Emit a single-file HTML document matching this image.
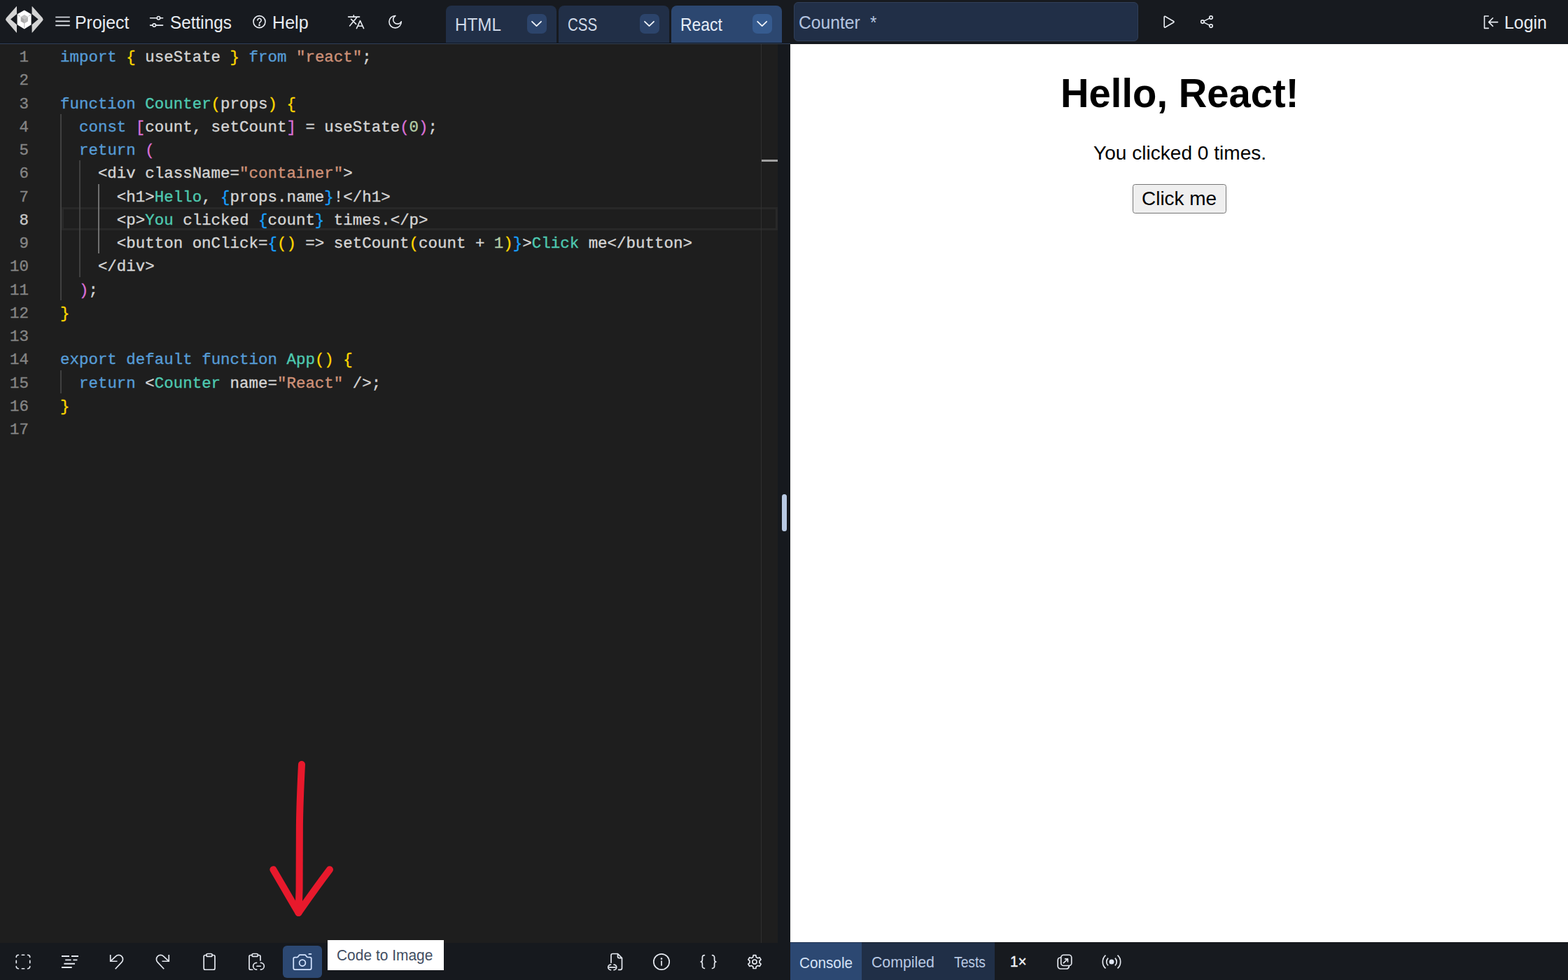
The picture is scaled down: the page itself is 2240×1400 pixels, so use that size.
<!DOCTYPE html>
<html lang="en">
<head>
<meta charset="utf-8">
<title>LiveCodes - Counter</title>
<style>
*{box-sizing:border-box;margin:0;padding:0}
html,body{width:2240px;height:1400px;overflow:hidden;background:#1e1e1e}
body{position:relative;font-family:"Liberation Sans",Arial,sans-serif;-webkit-font-smoothing:antialiased}
.abs,.t,svg.i{position:absolute}
header,nav,main,section,footer{display:block}
h1,p{font-weight:normal}
.t{white-space:pre;transform-origin:0 50%;font-family:"Liberation Sans",Arial,sans-serif}
svg.i{overflow:visible;fill:none;stroke:#e6eaf1;stroke-width:1.75;stroke-linecap:round;stroke-linejoin:round}

/* ---------- top bar ---------- */
#topbar{left:0;top:0;width:2240px;height:62px;background:#171a1f;border-bottom:1px solid #0e1623}
#edline{left:0;top:62px;width:1129px;height:1.3px;background:#344155}
.tab{top:8px;width:158px;height:53px;border-radius:8px 8px 0 0;background:#212f47}
.tab.on{background:#2c4770}
.dd{top:20px;width:28px;height:28px;border-radius:7px;background:#2c446b}
.tab.on + .dd, .dd.on{background:#365b8f}
#title{left:1134px;top:3px;width:492px;height:56px;border-radius:6px;background:#212f47;border:1.5px solid #313f58}

/* ---------- editor ---------- */
#editor{left:0;top:63px;width:1110.5px;height:1283.5px;background:#1e1e1e;overflow:hidden}
#code{position:absolute;left:0;top:0;width:1111px;font-family:"Liberation Mono","DejaVu Sans Mono",monospace;font-size:22.46px;line-height:33.25px;-webkit-text-stroke:0.35px}
.ln{position:absolute;left:0;width:1111px;height:33px;line-height:33px;white-space:pre}
.ln .no{position:absolute;left:0;top:0;width:41px;text-align:right;color:#858585}
.ln .src{position:absolute;left:86px;top:0;color:#d4d4d4}
.ln.cur .no{color:#c6c6c6}
#curline{left:88px;top:233px;width:1023px;height:33.25px;border:3.2px solid #282828}
.guide{width:2px;background:#404040}
.guide.act{background:#707070}
#ruler{left:1087px;top:63px;width:1px;height:1284px;background:#303030}
#mark{left:1088px;top:228px;width:23px;height:3px;background:#a0a0a0}
#gutter{left:1110.5px;top:63px;width:18.5px;height:1337px;background:#16191e}
#handle{left:1117px;top:706px;width:7px;height:53px;border-radius:3.5px;background:#b8c9e3}

/* ---------- preview ---------- */
#preview{left:1129px;top:62.9px;width:1111px;height:1283.2px;background:#fff;color:#000;text-align:center}
#btn{left:1618.2px;top:263.2px;width:133.8px;height:41.4px;border:1.6px solid #767676;border-radius:3.6px;background:#efefef}

/* ---------- bottom bars ---------- */
#botl{left:0;top:1346.5px;width:1111px;height:53.5px;background:#16191e}
#botr{left:1129px;top:1346px;width:1111px;height:54px;background:#171a1f;border-top:1px solid #0b0d11}
#tconsole{left:1129px;top:1346px;width:102px;height:54px;background:#2c4872;border-top:1px solid #1d3050}
#tothers{left:1231px;top:1346px;width:190px;height:54px;background:#202f47;border-top:1px solid #131c2c}
#cam{left:404px;top:1351px;width:56px;height:46px;border-radius:6px;background:#2c4872}
#tip{left:468px;top:1343px;width:166px;height:43px;background:#fff}

</style>
</head>
<body>
<header id="toolbar">
<div id="topbar" class="abs"></div>
<div id="edline" class="abs"></div>
<nav id="menu" aria-label="Main menu">
<span class="t" style="left:106.51px;top:14.30px;font-size:25px;line-height:36px;transform-origin:0 27px;transform:scaleX(0.9952);color:#e8ecf2;">Project</span><span class="t" style="left:242.78px;top:14.30px;font-size:25px;line-height:36px;transform-origin:0 27px;transform:scaleX(0.9737);color:#e8ecf2;">Settings</span><span class="t" style="left:388.99px;top:14.30px;font-size:25px;line-height:36px;transform-origin:0 27px;transform:scaleX(1.0049);color:#e8ecf2;">Help</span>
</nav>
<div id="editor-tabs" role="tablist">
<div class="abs tab" style="left:637px"></div><div class="abs dd" style="left:753px"></div>
<div class="abs tab" style="left:798px"></div><div class="abs dd" style="left:914px"></div>
<div class="abs tab on" style="left:959px"></div><div class="abs dd on" style="left:1075px"></div>
<span class="t" style="left:649.96px;top:16.30px;font-size:26.5px;line-height:38px;transform-origin:0 28px;transform:scaleX(0.9138);color:#cfd9e8;">HTML</span><span class="t" style="left:810.97px;top:16.30px;font-size:26.5px;line-height:38px;transform-origin:0 28px;transform:scaleX(0.7761);color:#cfd9e8;">CSS</span><span class="t" style="left:971.91px;top:16.30px;font-size:26.5px;line-height:38px;transform-origin:0 28px;transform:scaleX(0.8658);color:#e6edf7;">React</span>
</div>
<div id="title" class="abs"></div>
<span class="t" style="left:1141.27px;top:14.30px;font-size:25.5px;line-height:36px;transform-origin:0 27px;transform:scaleX(0.9679);color:#b4c5e0;">Counter</span><span class="t" style="left:1242.76px;top:14.30px;font-size:25.5px;line-height:36px;transform-origin:0 27px;transform:scaleX(0.9539);color:#b4c5e0;">*</span><span class="t" style="left:2148.61px;top:14.30px;font-size:25.5px;line-height:36px;transform-origin:0 27px;transform:scaleX(0.9742);color:#e8ecf2;">Login</span>
</header>

<main>
<section id="editor" class="abs" aria-label="Code editor">
<div id="curline" class="abs"></div>
<div class="abs guide" style="left:86px;top:99.75px;height:266px"></div>
<div class="abs guide" style="left:113px;top:166.25px;height:166.25px"></div>
<div class="abs guide act" style="left:140px;top:199.5px;height:99.75px"></div>
<div class="abs guide" style="left:86px;top:465.5px;height:33.25px"></div>
<div id="code">
<div class="ln" style="top:2.8px"><span class="no">1</span><span class="src"><span style="color:#569cd6">import</span><span style="color:#d4d4d4"> </span><span style="color:#ffd700">{</span><span style="color:#d4d4d4"> useState </span><span style="color:#ffd700">}</span><span style="color:#d4d4d4"> </span><span style="color:#569cd6">from</span><span style="color:#d4d4d4"> </span><span style="color:#ce9178">&quot;react&quot;</span><span style="color:#d4d4d4">;</span></span></div>
<div class="ln" style="top:35.8px"><span class="no">2</span><span class="src"></span></div>
<div class="ln" style="top:69.8px"><span class="no">3</span><span class="src"><span style="color:#569cd6">function</span><span style="color:#d4d4d4"> </span><span style="color:#4ec9b0">Counter</span><span style="color:#ffd700">(</span><span style="color:#d4d4d4">props</span><span style="color:#ffd700">)</span><span style="color:#d4d4d4"> </span><span style="color:#ffd700">{</span></span></div>
<div class="ln" style="top:102.8px"><span class="no">4</span><span class="src"><span style="color:#d4d4d4">  </span><span style="color:#569cd6">const</span><span style="color:#d4d4d4"> </span><span style="color:#da70d6">[</span><span style="color:#d4d4d4">count, setCount</span><span style="color:#da70d6">]</span><span style="color:#d4d4d4"> = useState</span><span style="color:#da70d6">(</span><span style="color:#b5cea8">0</span><span style="color:#da70d6">)</span><span style="color:#d4d4d4">;</span></span></div>
<div class="ln" style="top:135.8px"><span class="no">5</span><span class="src"><span style="color:#d4d4d4">  </span><span style="color:#569cd6">return</span><span style="color:#d4d4d4"> </span><span style="color:#da70d6">(</span></span></div>
<div class="ln" style="top:168.8px"><span class="no">6</span><span class="src"><span style="color:#d4d4d4">    &lt;div className=</span><span style="color:#ce9178">&quot;container&quot;</span><span style="color:#d4d4d4">&gt;</span></span></div>
<div class="ln" style="top:202.8px"><span class="no">7</span><span class="src"><span style="color:#d4d4d4">      &lt;h1&gt;</span><span style="color:#4ec9b0">Hello</span><span style="color:#d4d4d4">, </span><span style="color:#179fff">{</span><span style="color:#d4d4d4">props.name</span><span style="color:#179fff">}</span><span style="color:#d4d4d4">!&lt;/h1&gt;</span></span></div>
<div class="ln cur" style="top:235.8px"><span class="no">8</span><span class="src"><span style="color:#d4d4d4">      &lt;p&gt;</span><span style="color:#4ec9b0">You</span><span style="color:#d4d4d4"> clicked </span><span style="color:#179fff">{</span><span style="color:#d4d4d4">count</span><span style="color:#179fff">}</span><span style="color:#d4d4d4"> times.&lt;/p&gt;</span></span></div>
<div class="ln" style="top:268.8px"><span class="no">9</span><span class="src"><span style="color:#d4d4d4">      &lt;button onClick=</span><span style="color:#179fff">{</span><span style="color:#ffd700">()</span><span style="color:#d4d4d4"> =&gt; setCount</span><span style="color:#ffd700">(</span><span style="color:#d4d4d4">count + </span><span style="color:#b5cea8">1</span><span style="color:#ffd700">)</span><span style="color:#179fff">}</span><span style="color:#d4d4d4">&gt;</span><span style="color:#4ec9b0">Click</span><span style="color:#d4d4d4"> me&lt;/button&gt;</span></span></div>
<div class="ln" style="top:301.8px"><span class="no">10</span><span class="src"><span style="color:#d4d4d4">    &lt;/div&gt;</span></span></div>
<div class="ln" style="top:335.8px"><span class="no">11</span><span class="src"><span style="color:#d4d4d4">  </span><span style="color:#da70d6">)</span><span style="color:#d4d4d4">;</span></span></div>
<div class="ln" style="top:368.8px"><span class="no">12</span><span class="src"><span style="color:#ffd700">}</span></span></div>
<div class="ln" style="top:401.8px"><span class="no">13</span><span class="src"></span></div>
<div class="ln" style="top:434.8px"><span class="no">14</span><span class="src"><span style="color:#569cd6">export</span><span style="color:#d4d4d4"> </span><span style="color:#569cd6">default</span><span style="color:#d4d4d4"> </span><span style="color:#569cd6">function</span><span style="color:#d4d4d4"> </span><span style="color:#4ec9b0">App</span><span style="color:#ffd700">()</span><span style="color:#d4d4d4"> </span><span style="color:#ffd700">{</span></span></div>
<div class="ln" style="top:468.8px"><span class="no">15</span><span class="src"><span style="color:#d4d4d4">  </span><span style="color:#569cd6">return</span><span style="color:#d4d4d4"> &lt;</span><span style="color:#4ec9b0">Counter</span><span style="color:#d4d4d4"> name=</span><span style="color:#ce9178">&quot;React&quot;</span><span style="color:#d4d4d4"> /&gt;;</span></span></div>
<div class="ln" style="top:501.8px"><span class="no">16</span><span class="src"><span style="color:#ffd700">}</span></span></div>
<div class="ln" style="top:534.8px"><span class="no">17</span><span class="src"></span></div>
</div>
</section>
<div id="ruler" class="abs"></div>
<div id="mark" class="abs"></div>
<div id="gutter" class="abs"></div>
<div id="handle" class="abs"></div>

<section id="result" aria-label="Result">
<div id="preview" class="abs"></div>
<div id="btn" class="abs"></div>
<h1 class="t" style="left:1515.03px;top:98.30px;font-size:56px;font-weight:bold;line-height:71px;transform-origin:0 55px;transform:scale(1.0038,1.01);color:#000;">Hello, React!</h1><p class="t" style="left:1561.94px;top:199.30px;font-size:28px;line-height:39px;transform-origin:0 29px;transform:scaleX(1.0029);color:#000;">You clicked 0 times.</p><span class="t" style="left:1631.40px;top:264.30px;font-size:28px;line-height:39px;transform-origin:0 29px;transform:scaleX(0.9978);color:#000;">Click me</span>
</section>
</main>

<footer id="toolbars">
<div id="botl" class="abs"></div>
<div id="botr" class="abs"></div>
<div id="tconsole" class="abs"></div>
<div id="tothers" class="abs"></div>
<div id="cam" class="abs"></div>
<div id="tip" class="abs" role="tooltip"></div>
<span class="t" style="left:480.85px;top:1349.30px;font-size:21.3px;line-height:32px;transform-origin:0 23px;transform:scaleX(0.9834);color:#424e62;">Code to Image</span><span class="t" style="left:1141.96px;top:1358.30px;font-size:22.7px;line-height:34px;transform-origin:0 25px;transform:scaleX(0.9130);color:#d5e2f6;">Console</span><span class="t" style="left:1244.94px;top:1357.30px;font-size:22.7px;line-height:34px;transform-origin:0 25px;transform:scaleX(0.9371);color:#b9c9e3;">Compiled</span><span class="t" style="left:1362.61px;top:1357.30px;font-size:22.7px;line-height:34px;transform-origin:0 25px;transform:scaleX(0.8487);color:#b9c9e3;">Tests</span><span class="t" style="left:1443.05px;top:1357.30px;font-size:22.2px;line-height:33px;transform-origin:0 24px;transform:scaleX(0.9312);color:#eef1f6;-webkit-text-stroke:0.45px;">1×</span>
</footer>

<svg class="i" id="icons" width="2240" height="1400" viewBox="0 0 2240 1400" style="left:0;top:0">
<g stroke="none">
<path fill="#d4d4d4" d="M24 9.6 Q24 8.6 23.2 9.5 L9 25.4 Q7.2 27.6 9 29.8 L23.2 46.3 Q24 47.2 24 46.2 L24 35.2 L15.1 27.6 L24 20Z"/>
<path fill="#d4d4d4" d="M45.6 9.6 Q45.6 8.6 46.4 9.5 L60.7 25.4 Q62.5 27.6 60.7 29.8 L46.4 46.3 Q45.6 47.2 45.6 46.2 L45.6 35.2 L54.7 27.6 L45.6 20Z"/>
<path fill="#ffffff" d="M34.8 14.4 L44.6 20.2 L44.6 35.2 L34.8 41.6 L24.6 35.2 L24.6 20.2Z"/>
<path fill="#c2c2c2" d="M34.8 21 L39.9 24 L34.8 27.2 L29.7 24Z"/>
<path fill="#a6a6a6" d="M29.7 24 L34.8 27.2 L34.8 33.4 L29.7 30.4Z"/>
<path fill="#b4b4b4" d="M39.9 24 L34.8 27.2 L34.8 33.4 L39.9 30.4Z"/>
<path fill="none" stroke="#a0a0a0" stroke-width="0.8" d="M34.8 33.6V39.5M24.8 20.4L28.6 23.2M44.4 20.4L41 23.2"/>
</g>
<g stroke="#e9edf3" stroke-width="1.6">
<path stroke-linecap="butt" d="M79.3 24.5H99.8M79.3 30.4H99.8M79.3 36.4H99.8"/>
<path d="M214.6 25.75H224.2M228.8 25.75H232.6M214.6 36.1H218M222.6 36.1H232.6"/>
<circle cx="226.5" cy="25.75" r="2.2"/><circle cx="220.3" cy="36.1" r="2.2"/>
<circle cx="370.5" cy="31.1" r="8.5"/>
<path d="M367.9 29a2.65 2.65 0 1 1 4.1 2.2c-1 .6-1.45 1.1-1.45 2.1"/><circle cx="370.5" cy="35.9" r="0.55" fill="#eef1f6"/>
<path d="M497.6 24.1H513.6M505.3 21.9V24.1M509.9 24.6L499.6 37M501.6 27.4L508.6 34.4"/>
<path d="M509.4 40.6L514.5 29.6L519.6 40.6M511 37.3H518"/>
<path d="M564.9 22.5A8.7 8.7 0 1 0 573.3 30.9A6.2 6.2 0 1 1 564.9 22.5Z"/>
<path d="M1663.2 24.2V38.2a.9.9 0 0 0 1.35.75L1676.6 32a.9.9 0 0 0 0-1.55L1664.55 23.45a.9.9 0 0 0-1.35.75Z"/>
<circle cx="1730" cy="25.1" r="2.25"/><circle cx="1717.9" cy="31.1" r="2.25"/><circle cx="1730" cy="37.1" r="2.25"/>
<path d="M1720 30.1L1727.9 26.1M1720 32.1L1727.9 36.1"/>
<path d="M2126.4 23H2120.6V40.4H2126.4M2139.6 31.6H2127M2132.6 25.8L2126.8 31.6L2132.6 37.4"/>
</g>
<g stroke="#f2f5fa" stroke-width="1.8">
<path d="M760.0 30.8L766.5 37.1L773.0 30.8"/>
<path d="M921.0 30.8L927.5 37.1L934.0 30.8"/>
<path d="M1082.2 30.8L1088.7 37.1L1095.2 30.8"/>
</g>
<g stroke="#e4e8ef" stroke-width="1.7">
<path d="M23.25 1367.35A3.1 3.1 0 0 1 26.35 1364.25M39.65 1364.25A3.1 3.1 0 0 1 42.75 1367.35M42.75 1380.65A3.1 3.1 0 0 1 39.65 1383.75M26.35 1383.75A3.1 3.1 0 0 1 23.25 1380.65M31.4 1364.25H34.6M31.4 1383.75H34.6M23.25 1372.4V1375.6M42.75 1372.4V1375.6"/>
<path stroke-linecap="butt" stroke-width="1.9" d="M88 1366H99M102 1366H112M93.2 1371.4H101.6M104.4 1371.4H110.4M91.4 1376.75H107M88 1382H102.7"/>
<path stroke-linecap="butt" stroke-linejoin="miter" d="M157.75 1364V1373.25H167.5"/><path stroke-linecap="butt" d="M157.9 1373.1L165.4 1366.2A5.9 5.9 0 0 1 173.8 1374.6L164.75 1384.25"/>
<path stroke-linecap="butt" stroke-linejoin="miter" d="M241.25 1364V1373.25H231.5"/><path stroke-linecap="butt" d="M241.1 1373.1L233.6 1366.2A5.9 5.9 0 0 0 225.2 1374.6L234.25 1384.25"/>
<path d="M294.6 1364.5H293.2a2 2 0 0 0 -2 2V1383.25a2 2 0 0 0 2 2H305a2 2 0 0 0 2 -2V1366.5a2 2 0 0 0 -2 -2H303.4"/>
<rect x="294.75" y="1362.5" width="8.5" height="3.9" rx="1.95"/>
<path d="M359.8 1364.5H358a2 2 0 0 0 -2 2V1383.25a2 2 0 0 0 2 2H360.6M368.6 1364.5H370a2 2 0 0 1 2 2V1372"/>
<rect x="360" y="1362.5" width="8.5" height="3.9" rx="1.95"/>
<path d="M366.6 1375.3a4.95 4.95 0 0 0 0 9.9M372.4 1375.3a4.95 4.95 0 0 1 0 9.9M367 1380.25H372.2"/>
</g>
<g stroke="#d3e3ff" stroke-width="1.75">
<path d="M421.25 1367.5H424.2a2 2 0 0 0 1.7 -1L426.9 1365.2a2 2 0 0 1 1.7 -1H435.4a2 2 0 0 1 1.7 1L438.1 1366.5a2 2 0 0 0 1.7 1H442.75a2 2 0 0 1 2 2V1383a2 2 0 0 1 -2 2H421.25a2 2 0 0 1 -2 -2V1369.5a2 2 0 0 1 2 -2Z"/>
<circle cx="432" cy="1375.6" r="4.4"/><path d="M441.4 1362.9H444.4"/>
</g>
<g stroke="#e4e8ef" stroke-width="1.7">
<path d="M873 1375.2V1364.8a2.3 2.3 0 0 1 2.3 -2.3H882.5L888.5 1368.6V1383a2.3 2.3 0 0 1 -2.3 2.3H883.6M882.5 1362.5V1366.6a2 2 0 0 0 2 2H888.5"/>
<path d="M872.5 1378.1a3.75 3.75 0 0 0 0 7.5M877 1378.1a3.75 3.75 0 0 1 0 7.5M870.6 1381.9H878.9"/>
<circle cx="945" cy="1374" r="11.2"/><path d="M945 1373V1379"/><circle cx="945" cy="1369.6" r="0.5" fill="#e6eaf1"/>
<path d="M1006.4 1364.6a3 3 0 0 0 -3 3V1370.8c0 1.8 -.8 3.2 -2.3 3.2c1.5 0 2.3 1.4 2.3 3.2V1380.4a3 3 0 0 0 3 3"/>
<path d="M1017.6 1364.6a3 3 0 0 1 3 3V1370.8c0 1.8 .8 3.2 2.3 3.2c-1.5 0 -2.3 1.4 -2.3 3.2V1380.4a3 3 0 0 1 -3 3"/>
<path d="M1080.31 1367.39 L1079.83 1364.68 L1076.17 1364.68 L1075.69 1367.39 L1073.34 1368.74 L1070.75 1367.80 L1068.92 1370.97 L1071.03 1372.75 L1071.03 1375.45 L1068.92 1377.23 L1070.75 1380.40 L1073.34 1379.46 L1075.69 1380.81 L1076.17 1383.52 L1079.83 1383.52 L1080.31 1380.81 L1082.66 1379.46 L1085.25 1380.40 L1087.08 1377.23 L1084.97 1375.45 L1084.97 1372.75 L1087.08 1370.97 L1085.25 1367.80 L1082.66 1368.74Z"/><circle cx="1078" cy="1374.1" r="3.1"/>
<rect x="1515.75" y="1364.25" width="15" height="15.25" rx="3.6"/>
<path d="M1527.2 1380.4a3.8 3.8 0 0 1 -3.7 3.6H1515a3.8 3.8 0 0 1 -3.8 -3.8V1371.8a3.8 3.8 0 0 1 3.6 -3.8"/>
<path d="M1519.4 1375.7L1525.3 1370M1521.6 1369.9H1525.4V1373.8"/>
<path stroke-linecap="butt" d="M1579.50 1364.56A12.7 12.7 0 0 0 1579.50 1383.44M1596.50 1364.56A12.7 12.7 0 0 1 1596.50 1383.44M1583.12 1368.58A7.3 7.3 0 0 0 1583.12 1379.42M1592.88 1368.58A7.3 7.3 0 0 1 1592.88 1379.42"/>
<circle cx="1588" cy="1374.1" r="3.5" fill="#dfe5f2" stroke="none"/>
</g>
<g stroke="#e8192c" stroke-width="10">
<path d="M431 1092C429.6 1120 428.2 1150 427.9 1180L427.6 1270L426.5 1304"/>
<path d="M390.4 1242.2C402 1262 414 1283 426.5 1304C441 1283 456 1262 471 1242.2"/>
</g>
</svg>

</body>
</html>
